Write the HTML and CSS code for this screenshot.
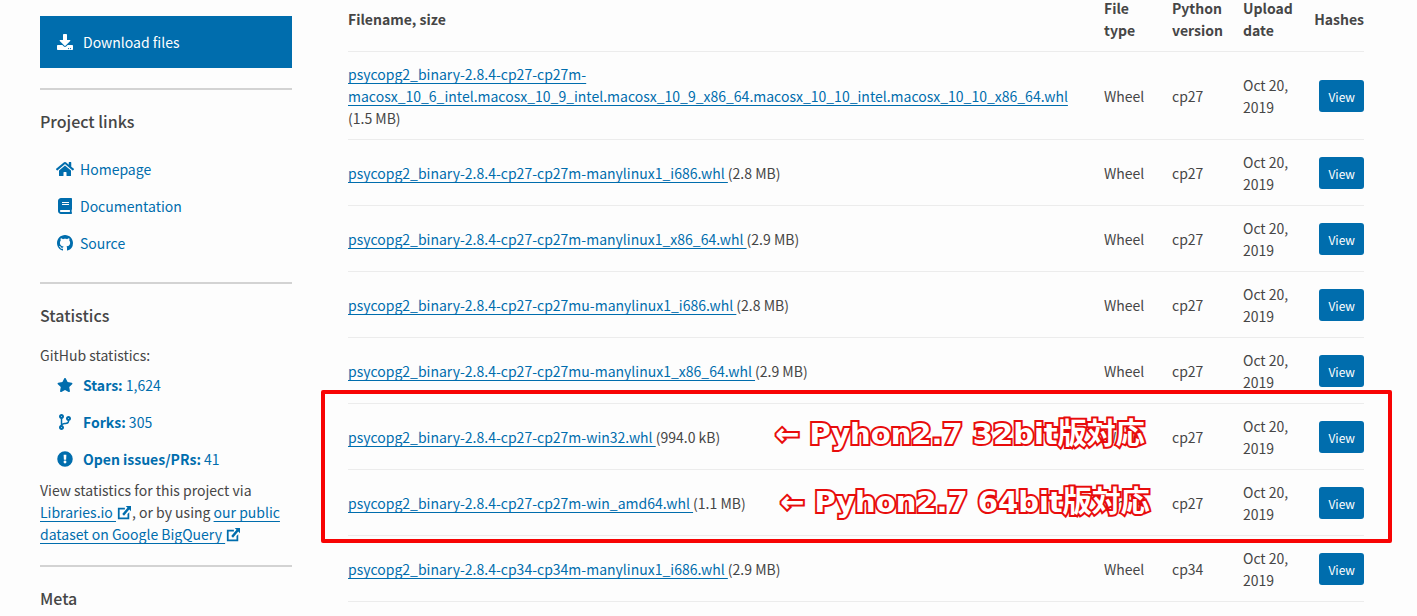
FILE: index.html
```html
<!DOCTYPE html>
<html lang="ja">
<head>
    <meta charset="UTF-8">
    <meta name="viewport" content="width=device-width, initial-scale=1.0">
    <title>psycopg2-binary · PyPI</title>
    <link rel="stylesheet" href="styles.css">
</head>
<body>

<!-- icon shapes used in the sidebar -->
<svg class="sprite" aria-hidden="true">
    <symbol id="download" viewBox="0 0 512 512"><path d="M216 0h80c13.300 0 24 10.700 24 24v168h87.700c17.800 0 26.700 21.500 14.100 34.100L269.700 378.300c-7.500 7.500-19.800 7.500-27.300 0L90.100 226.100c-12.600-12.600-3.700-34.100 14.100-34.100H192V24c0-13.300 10.700-24 24-24zm296 376v112c0 13.300-10.700 24-24 24H24c-13.300 0-24-10.700-24-24V376c0-13.300 10.700-24 24-24h146.700l49 49c20.100 20.100 52.500 20.100 72.600 0l49-49H488c13.300 0 24 10.700 24 24zm-124 88c0-11-9-20-20-20s-20 9-20 20 9 20 20 20 20-9 20-20zm64 0c0-11-9-20-20-20s-20 9-20 20 9 20 20 20 20-9 20-20z"/></symbol>
    <symbol id="home" viewBox="0 0 576 512"><path d="M280.370 148.260L96 300.110V464a16 16 0 0 0 16 16l112.060-.29a16 16 0 0 0 15.920-16V368a16 16 0 0 1 16-16h64a16 16 0 0 1 16 16v95.640a16 16 0 0 0 16 16.050L464 480a16 16 0 0 0 16-16V300L295.670 148.260a12.190 12.190 0 0 0-15.300 0zM571.600 251.470L488 182.560V44.050a12 12 0 0 0-12-12h-56a12 12 0 0 0-12 12v72.610L318.470 43a48 48 0 0 0-61 0L4.340 251.470a12 12 0 0 0-1.600 16.900l25.500 31A12 12 0 0 0 45.150 301l235.220-193.740a12.190 12.190 0 0 1 15.300 0L530.900 301a12 12 0 0 0 16.900-1.600l25.500-31a12 12 0 0 0-1.700-16.930z"/></symbol>
    <symbol id="book" viewBox="0 0 448 512"><path d="M448 360V24c0-13.300-10.700-24-24-24H96C43 0 0 43 0 96v320c0 53 43 96 96 96h328c13.300 0 24-10.700 24-24v-16c0-7.500-3.500-14.300-8.900-18.700-4.200-15.400-4.200-59.300 0-74.700 5.400-4.300 8.900-11.100 8.900-18.600zM128 134c0-3.300 2.700-6 6-6h212c3.300 0 6 2.700 6 6v20c0 3.300-2.700 6-6 6H134c-3.300 0-6-2.700-6-6v-20zm0 64c0-3.300 2.700-6 6-6h212c3.300 0 6 2.700 6 6v20c0 3.300-2.700 6-6 6H134c-3.300 0-6-2.700-6-6v-20zm253.400 250H96c-17.700 0-32-14.300-32-32 0-17.600 14.400-32 32-32h285.400c-1.900 17.100-1.900 46.900 0 64z"/></symbol>
    <symbol id="github" viewBox="0 0 16 16"><path d="M8 0C3.580 0 0 3.580 0 8c0 3.540 2.290 6.530 5.470 7.590.4.070.55-.17.55-.38 0-.19-.01-.82-.01-1.490-2.010.37-2.530-.49-2.690-.94-.09-.23-.48-.94-.82-1.130-.28-.15-.68-.52-.01-.53.63-.01 1.080.58 1.230.82.72 1.210 1.870.87 2.330.66.07-.52.28-.87.51-1.070-1.780-.2-3.640-.89-3.640-3.950 0-.87.31-1.590.82-2.150-.08-.2-.36-1.020.08-2.120 0 0 .67-.21 2.200.82.64-.18 1.320-.27 2-.27s1.360.09 2 .27c1.530-1.040 2.200-.82 2.200-.82.44 1.100.16 1.920.08 2.120.51.56.82 1.270.82 2.150 0 3.070-1.870 3.750-3.650 3.950.29.25.54.73.54 1.480 0 1.070-.01 1.930-.01 2.200 0 .21.15.46.55.38A8.010 8.010 0 0 0 16 8c0-4.420-3.580-8-8-8z"/></symbol>
    <symbol id="star" viewBox="0 0 576 512"><path d="M259.300 17.800L194 150.200 47.900 171.500c-26.200 3.800-36.700 36.100-17.700 54.600l105.700 103-25 145.500c-4.500 26.300 23.200 46 46.400 33.700L288 439.600l130.700 68.700c23.200 12.200 50.900-7.400 46.400-33.700l-25-145.500 105.700-103c19-18.500 8.500-50.800-17.700-54.600L382 150.200 316.700 17.800c-11.700-23.600-45.600-23.900-57.400 0z"/></symbol>
    <symbol id="branch" viewBox="0 0 384 512"><path d="M384 144c0-44.200-35.800-80-80-80s-80 35.800-80 80c0 36.400 24.300 67.100 57.500 76.800-.6 16.100-4.200 28.500-11 36.900-15.400 19.200-49.300 22.400-85.200 25.700-28.200 2.600-57.400 5.400-81.300 16.900v-144c32.500-10.200 56-40.500 56-76.300 0-44.200-35.800-80-80-80S0 35.800 0 80c0 35.800 23.500 66.100 56 76.300v199.300C23.500 365.900 0 396.200 0 432c0 44.200 35.800 80 80 80s80-35.800 80-80c0-34-21.200-63.100-51.200-74.600 3.100-5.200 7.800-9.800 14.900-13.400 16.200-8.200 40.400-10.400 66.100-12.800 42.200-3.900 90-8.400 118.200-43.400 14-17.400 21.100-39.800 21.600-67.900 31.600-10.800 54.400-40.700 54.400-75.900zM80 64c8.800 0 16 7.200 16 16s-7.200 16-16 16-16-7.200-16-16 7.200-16 16-16zm0 384c-8.800 0-16-7.200-16-16s7.200-16 16-16 16 7.200 16 16-7.200 16-16 16zm224-320c8.800 0 16 7.200 16 16s-7.200 16-16 16-16-7.200-16-16 7.200-16 16-16z"/></symbol>
    <symbol id="issue" viewBox="0 0 512 512"><path fill-rule="evenodd" d="M256 8a248 248 0 1 0 0 496 248 248 0 0 0 0-496zm0 298a46 46 0 1 1 0 92 46 46 0 0 1 0-92zm-44-178c0-7 5-12 12-12h64c7 0 12 5 12 12l-8 142c0 6-5 10-12 10h-48c-7 0-12-4-12-10z"/></symbol>
    <symbol id="external" viewBox="0 0 16 16"><path d="M9 2v2H3v9h9V9l2-2v8H1V2zM10 0h6v6l-2-2-6 7-2-2 6-7z"/></symbol>
</svg>

<div class="page">
    <aside class="sidebar">
        <a class="download" href="#files"><svg class="icon"><use href="#download"/></svg>Download files</a>

        <section class="section">
            <h3>Project links</h3>
            <ul class="links">
                <li><a href="#"><svg class="icon wide"><use href="#home"/></svg>Homepage</a></li>
                <li><a href="#"><svg class="icon wide"><use href="#book"/></svg>Documentation</a></li>
                <li><a href="#"><svg class="icon wide"><use href="#github"/></svg>Source</a></li>
            </ul>
        </section>

        <section class="section">
            <h3>Statistics</h3>
            <p>GitHub statistics:</p>
            <ul class="stats">
                <li><a href="#"><svg class="icon"><use href="#star"/></svg><span><strong>Stars:</strong> 1,624</span></a></li>
                <li><a href="#"><svg class="icon"><use href="#branch"/></svg><span><strong>Forks:</strong> 305</span></a></li>
                <li><a href="#"><svg class="icon"><use href="#issue"/></svg><span><strong>Open issues/PRs:</strong> 41</span></a></li>
            </ul>
            <p>View statistics for this project via <a class="underlined" href="#">Libraries.io <svg class="external"><use href="#external"/></svg></a>, or by using <a class="underlined" href="#">our public dataset on Google BigQuery <svg class="external"><use href="#external"/></svg></a></p>
        </section>

        <section class="section">
            <h3>Meta</h3>
        </section>
    </aside>

    <main class="files" id="files">
        <table>
            <colgroup>
                <col>
                <col class="col-type">
                <col class="col-version">
                <col class="col-date">
                <col class="col-hashes">
            </colgroup>
            <thead>
                <tr><th>Filename, size</th><th>File type</th><th>Python version</th><th>Upload date</th><th class="hashes">Hashes</th></tr>
            </thead>
            <tbody>
                <tr>
                    <td><a class="underlined" href="#">psycopg2_binary-2.8.4-cp27-cp27m-<wbr>macosx_10_6_intel.macosx_10_9_intel.macosx_10_9_x86_64.macosx_10_10_intel.macosx_10_10_x86_64.whl </a><span class="size">(1.5 MB)</span></td>
                    <td>Wheel</td><td>cp27</td><td>Oct 20, 2019</td><td class="hashes"><button type="button">View</button></td>
                </tr>
                <tr>
                    <td><a class="underlined" href="#">psycopg2_binary-2.8.4-cp27-cp27m-manylinux1_i686.whl </a><span class="size">(2.8 MB)</span></td>
                    <td>Wheel</td><td>cp27</td><td>Oct 20, 2019</td><td class="hashes"><button type="button">View</button></td>
                </tr>
                <tr>
                    <td><a class="underlined" href="#">psycopg2_binary-2.8.4-cp27-cp27m-manylinux1_x86_64.whl </a><span class="size">(2.9 MB)</span></td>
                    <td>Wheel</td><td>cp27</td><td>Oct 20, 2019</td><td class="hashes"><button type="button">View</button></td>
                </tr>
                <tr>
                    <td><a class="underlined" href="#">psycopg2_binary-2.8.4-cp27-cp27mu-manylinux1_i686.whl </a><span class="size">(2.8 MB)</span></td>
                    <td>Wheel</td><td>cp27</td><td>Oct 20, 2019</td><td class="hashes"><button type="button">View</button></td>
                </tr>
                <tr>
                    <td><a class="underlined" href="#">psycopg2_binary-2.8.4-cp27-cp27mu-manylinux1_x86_64.whl </a><span class="size">(2.9 MB)</span></td>
                    <td>Wheel</td><td>cp27</td><td>Oct 20, 2019</td><td class="hashes"><button type="button">View</button></td>
                </tr>
                <tr>
                    <td><a class="underlined" href="#">psycopg2_binary-2.8.4-cp27-cp27m-win32.whl </a><span class="size">(994.0 kB)</span></td>
                    <td>Wheel</td><td>cp27</td><td>Oct 20, 2019</td><td class="hashes"><button type="button">View</button></td>
                </tr>
                <tr>
                    <td><a class="underlined" href="#">psycopg2_binary-2.8.4-cp27-cp27m-win_amd64.whl </a><span class="size">(1.1 MB)</span></td>
                    <td>Wheel</td><td>cp27</td><td>Oct 20, 2019</td><td class="hashes"><button type="button">View</button></td>
                </tr>
                <tr>
                    <td><a class="underlined" href="#">psycopg2_binary-2.8.4-cp34-cp34m-manylinux1_i686.whl </a><span class="size">(2.9 MB)</span></td>
                    <td>Wheel</td><td>cp34</td><td>Oct 20, 2019</td><td class="hashes"><button type="button">View</button></td>
                </tr>
            </tbody>
        </table>

        <!-- red frame and notes over the Windows wheels -->
        <div class="highlight">
            <span class="note note-32">← Pyhon2.7 32bit版対応</span>
            <span class="note note-64">← Pyhon2.7 64bit版対応</span>
        </div>
    </main>
</div>

</body>
</html>
```
FILE: styles.css
```css
* {
    box-sizing: border-box;
}

body {
    margin: 0;
    background-color: #fdfdfd;
    color: #464646;
    font-family: "Noto Sans CJK JP", "Open Sans", sans-serif;
    font-size: 14px;
    line-height: 22px;
    overflow: hidden;
}

a {
    color: #006dad; /* PyPI blue */
    text-decoration: none;
}

ul {
    list-style: none;
    margin: 0;
    padding: 0;
}

p {
    margin: 0;
}

.sprite {
    display: none;
}

.page {
    display: flex;
    gap: 56px;
    height: 100vh;
    padding: 0 53px 0 40px;
}

/* Sidebar */
.sidebar {
    flex: 0 0 252px;
    padding-top: 16px;
}

.download {
    display: flex;
    align-items: center;
    gap: 10px;
    padding: 15px 17px;
    margin-bottom: 20px;
    background-color: #006dad;
    color: #fff;
}

.icon {
    width: 16px;
    height: 16px;
    fill: currentColor;
}

.icon.wide {
    width: 18px;
}

.section {
    border-top: 2px solid #d3d3d3;
    padding: 19px 0 20px;
}

h3 {
    margin: 0 0 17px;
    font-size: 16px;
    line-height: 24px;
    font-weight: 500;
}

.links {
    margin-bottom: 1px;
}

.stats {
    margin-bottom: 2px;
}

.links a,
.stats a {
    display: flex;
    align-items: center;
    height: 37px;
}

.links a {
    gap: 6px;
    padding-left: 16px;
}

.stats a {
    gap: 10px;
    padding-left: 17px;
}

.underlined {
    text-decoration: underline;
    text-decoration-thickness: 1px;
    text-decoration-skip-ink: none;
    text-underline-offset: 3px;
}

.external {
    width: 16px;
    height: 14px;
    fill: currentColor;
    vertical-align: -2px;
}

/* File list */
.files {
    position: relative;
    flex: 1;
    min-width: 0;
}

table {
    width: 100%;
    margin-top: -3px;
    table-layout: fixed;
    border-collapse: collapse;
}

.col-type {
    width: 68px;
}

.col-version {
    width: 71px;
}

.col-date {
    width: 66px;
}

.col-hashes {
    width: 55px;
}

th,
td {
    padding: 11px 0 10px;
    border-bottom: 1px solid #ececec;
    text-align: left;
    vertical-align: middle;
}

th {
    padding: 0 0 10px;
    font-weight: 700;
}

th:not(:first-child),
td:not(:first-child) {
    padding-right: 10px;
}

th.hashes,
td.hashes {
    padding-right: 0;
    text-align: right;
}

.size {
    display: inline-block;
}

button {
    height: 32px;
    padding: 0 9px;
    border: none;
    border-radius: 3px;
    background-color: #006dad;
    color: #fff;
    font-family: inherit;
    font-size: 12px;
    cursor: pointer;
}

/* Annotations */
.highlight {
    position: absolute;
    top: 390px;
    left: -27px;
    right: -28px;
    height: 153px;
    border: 4px solid #f80404;
    border-radius: 2px;
    pointer-events: none;
}

.note {
    position: absolute;
    color: #fff;
    font-family: "DejaVu Sans", "Noto Sans CJK JP", sans-serif;
    font-size: 29px;
    font-weight: 700;
    line-height: 40px;
    white-space: nowrap;
    -webkit-text-stroke: 4px #e80c0c;
    paint-order: stroke fill;
    stroke-linejoin: round;
}

.note-32 {
    top: 20px;
    left: 450px;
}

.note-64 {
    top: 88px;
    left: 455px;
}
```
